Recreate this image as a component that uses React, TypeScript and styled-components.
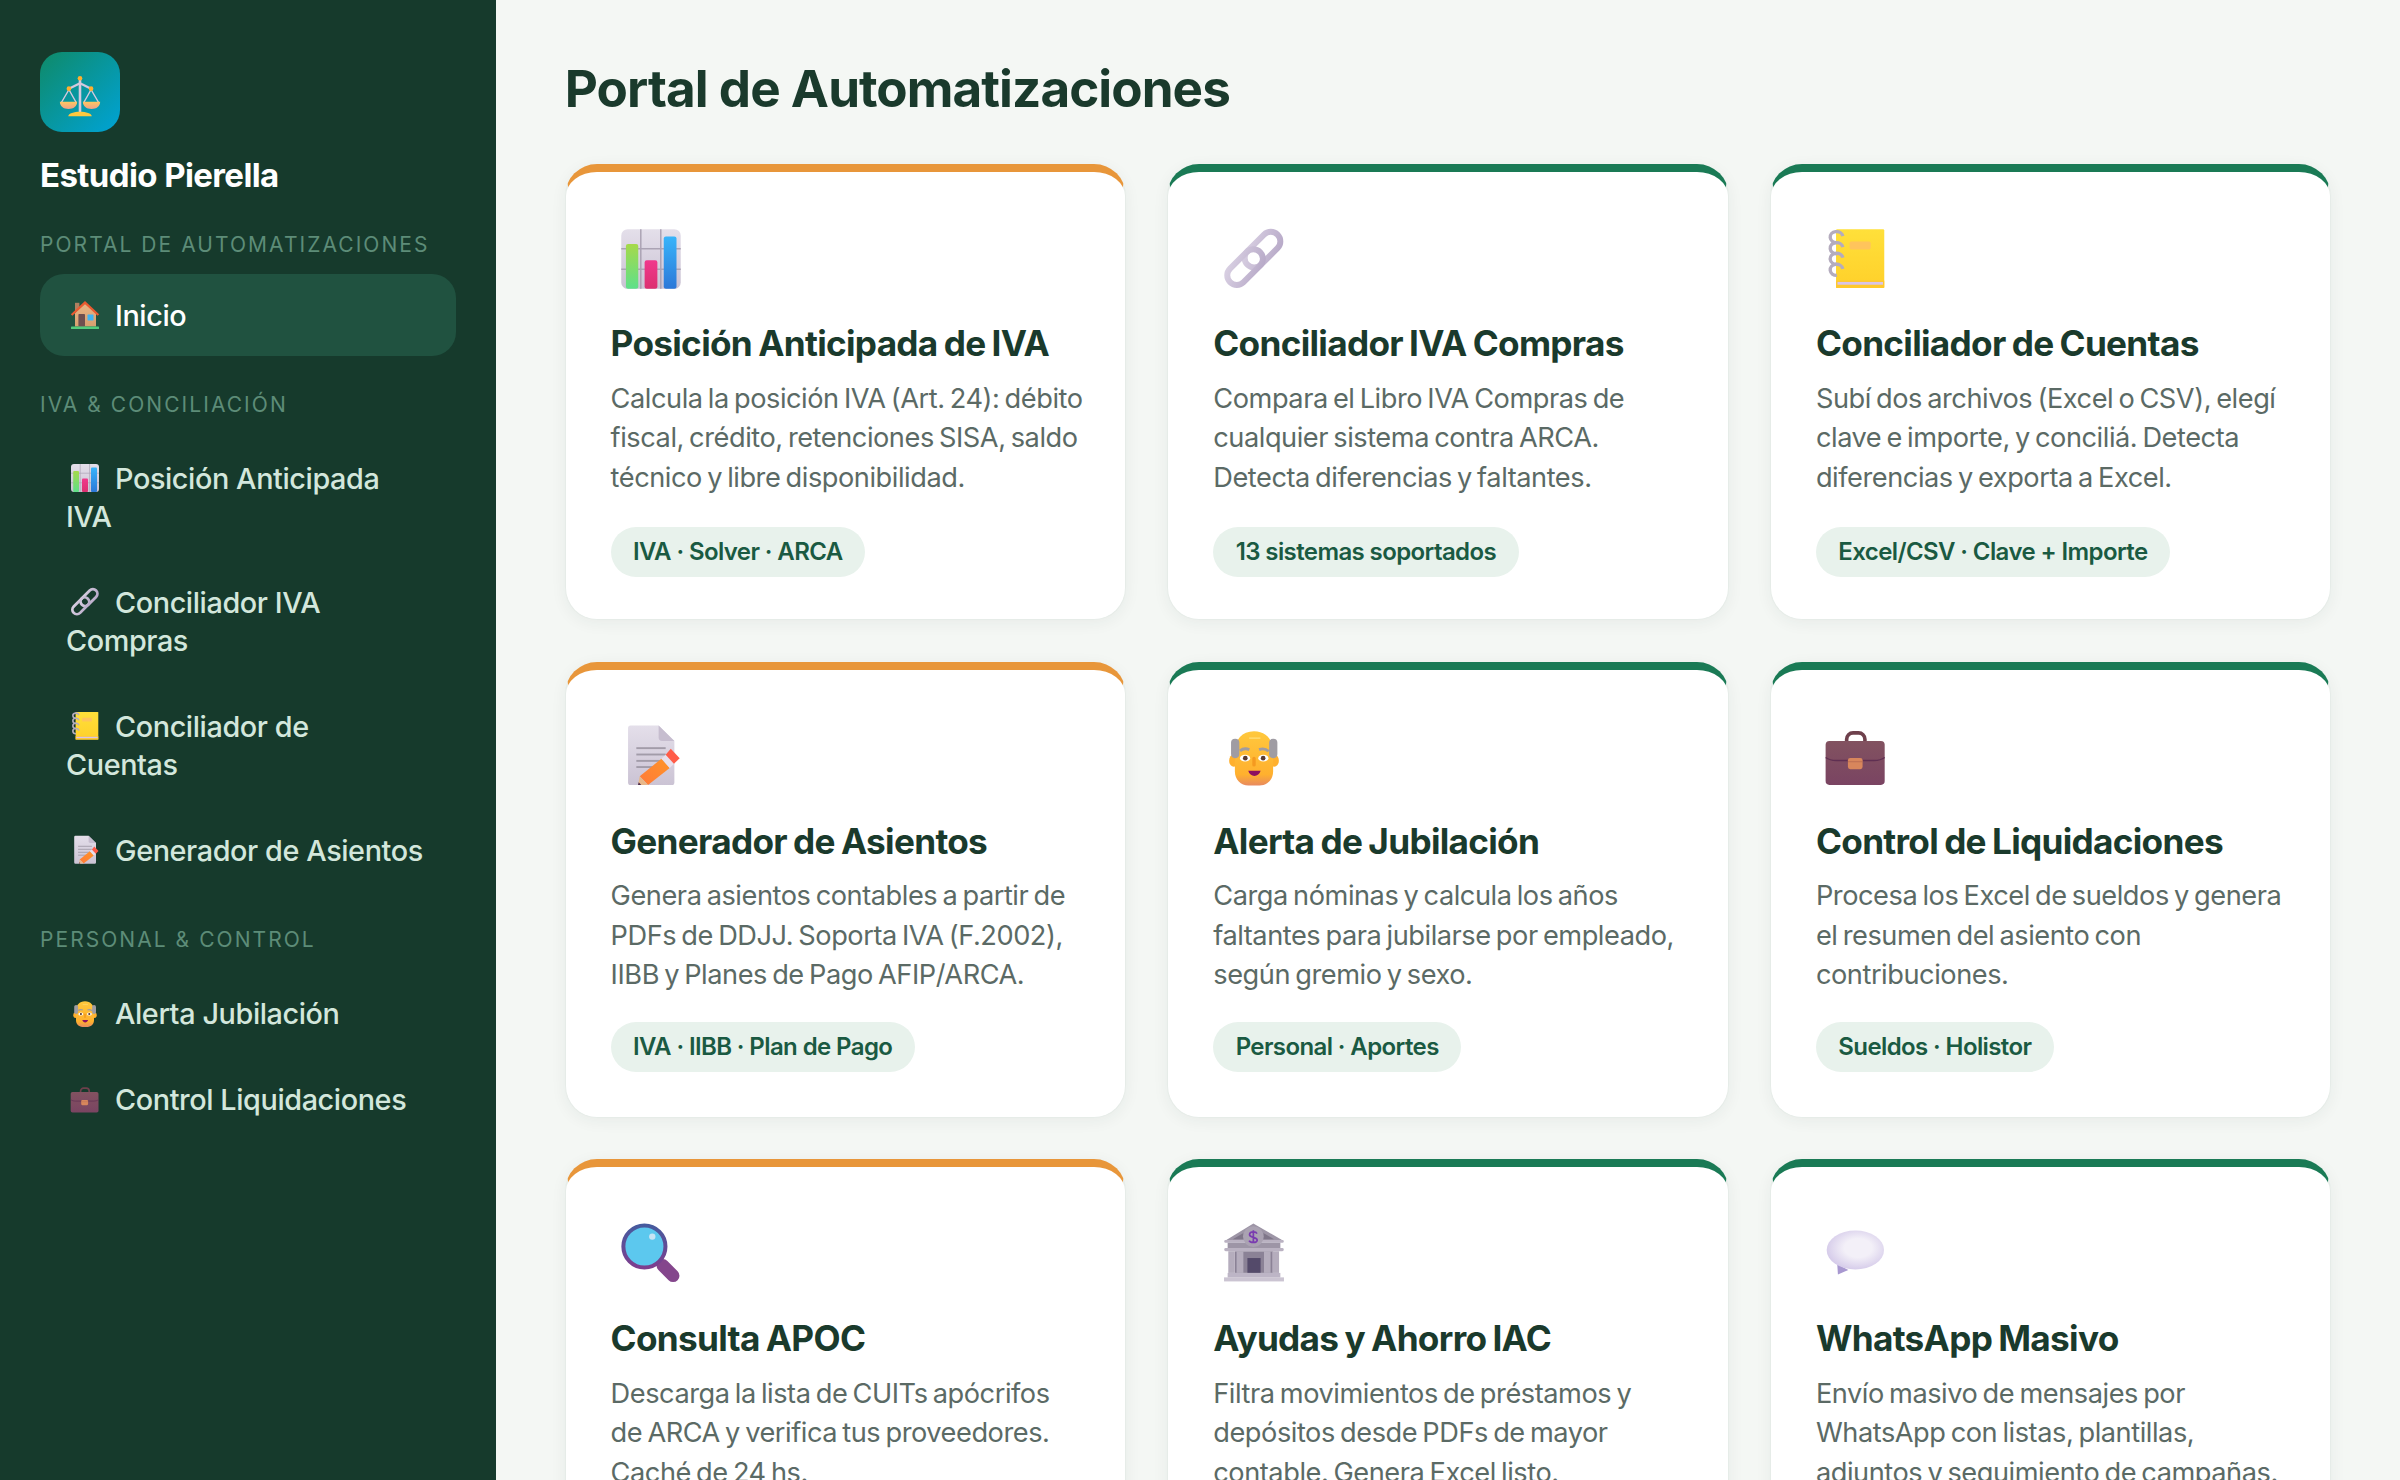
import React from 'react';
import styled, { createGlobalStyle } from 'styled-components';

const FONT = '"Inter", "Liberation Sans", sans-serif';

const GlobalStyle = createGlobalStyle`
  html, body {
    margin: 0;
    padding: 0;
    background: #f4f7f4;
  }
  * {
    box-sizing: border-box;
  }
`;

const Page = styled.div`
  display: flex;
  height: 1480px;
  overflow: hidden;
  font-family: ${FONT};
`;

const Sidebar = styled.aside`
  flex: none;
  width: 496px;
  padding: 52px 40px 0;
  background: #163a2c;
`;

const Logo = styled.div`
  display: flex;
  align-items: center;
  justify-content: center;
  width: 80px;
  height: 80px;
  padding-top: 8px;
  border-radius: 22px;
  background: linear-gradient(135deg, #0f8a68, #00a3d6);
`;

const Brand = styled.div`
  margin-top: 20.5px;
  font-size: 33px;
  line-height: 44px;
  font-weight: 700;
  letter-spacing: -0.6px;
  color: #ffffff;
`;

const SectionLabel = styled.div<{ $first?: boolean }>`
  margin: ${(p) => (p.$first ? '35px' : '36px')} 0 ${(p) => (p.$first ? '16.5px' : '19px')};
  font-size: 21px;
  line-height: 26px;
  font-weight: 400;
  letter-spacing: 2.05px;
  text-transform: uppercase;
  color: #5d8c78;
`;

const NavItem = styled.div<{ $active?: boolean }>`
  margin-bottom: 4px;
  padding: 23px 31px 21px 26px;
  border-radius: 24px;
  font-size: 28.8px;
  line-height: 38px;
  font-weight: 500;
  letter-spacing: -0.4px;
  color: ${(p) => (p.$active ? '#ffffff' : '#d3e7dc')};
  background: ${(p) => (p.$active ? '#205240' : 'transparent')};
`;

const NavGlyph = styled.svg`
  display: inline-block;
  width: 32px;
  height: 32px;
  margin: 0 14px 0 3px;
  vertical-align: -5px;
`;

const LogoGlyph = styled.svg`
  display: block;
  width: 46px;
  height: 46px;
`;

const CardGlyph = styled.svg`
  display: block;
  width: 68px;
  height: 68px;
  margin: 8px 0 0 6.4px;
`;

const Main = styled.main`
  flex: 1;
  min-width: 0;
  padding: 58px 68.8px 0;
`;

const Heading = styled.h1`
  margin: 0 0 45px;
  font-size: 51.2px;
  line-height: 61px;
  font-weight: 700;
  letter-spacing: -0.95px;
  color: #1a3a2c;
`;

const CardGrid = styled.div`
  display: grid;
  grid-template-columns: repeat(3, minmax(0, 1fr));
  gap: 41.6px;
`;

const CardTitle = styled.h2`
  margin: 27.5px 0 12.5px;
  font-size: 35.2px;
  line-height: 46px;
  font-weight: 700;
  letter-spacing: -0.7px;
  word-spacing: -1.5px;
  color: #1a3a2c;
`;

const CardText = styled.p`
  margin: 0;
  font-size: 27.2px;
  line-height: 39.4px;
  font-weight: 400;
  letter-spacing: -0.45px;
  word-spacing: -2px;
  color: #5b6a65;
  white-space: pre;
`;

const Tag = styled.span`
  display: inline-block;
  margin-top: 30px;
  padding: 0 22.4px;
  border-radius: 26px;
  font-size: 24px;
  line-height: 50px;
  font-weight: 600;
  letter-spacing: -0.6px;
  color: #1a5a42;
  background: #e8f2ec;
`;

const Card = styled.article<{ $accent: string }>`
  height: 456px;
  padding: 44.8px 44.8px 0;
  border: 1.6px solid #e6ece8;
  border-top: 8px solid ${(p) => p.$accent};
  border-radius: 32px;
  background: #ffffff;
  box-shadow: 0 3px 16px rgba(26, 58, 44, 0.06);

  &:nth-child(n + 4) ${Tag} {
    margin-top: 27px;
  }
`;

const HiddenDefs = styled.svg`
  position: absolute;
  width: 0;
  height: 0;
`;

const Gradients = () => (
  <HiddenDefs aria-hidden="true">
    <defs>
      <linearGradient id="e-paper" x1="0" y1="0" x2="0" y2="1">
        <stop offset="0" stopColor="#e4dfea" />
        <stop offset="1" stopColor="#cbc3d4" />
      </linearGradient>
      <linearGradient id="e-green" x1="0" y1="0" x2="0" y2="1">
        <stop offset="0" stopColor="#a6d94a" />
        <stop offset="1" stopColor="#5ee08a" />
      </linearGradient>
      <linearGradient id="e-pink" x1="0" y1="0" x2="0" y2="1">
        <stop offset="0" stopColor="#f0388c" />
        <stop offset="1" stopColor="#dc3070" />
      </linearGradient>
      <linearGradient id="e-blue" x1="0" y1="0" x2="0" y2="1">
        <stop offset="0" stopColor="#38b4fa" />
        <stop offset="1" stopColor="#2c78d8" />
      </linearGradient>
      <linearGradient id="e-chain" x1="0" y1="0" x2="1" y2="1">
        <stop offset="0" stopColor="#d8cfe2" />
        <stop offset="1" stopColor="#b8aac8" />
      </linearGradient>
      <linearGradient id="e-book" x1="0" y1="0" x2="0" y2="1">
        <stop offset="0" stopColor="#ffe03a" />
        <stop offset="1" stopColor="#ffd02a" />
      </linearGradient>
      <linearGradient id="e-pencil" x1="1" y1="0" x2="0" y2="1">
        <stop offset="0" stopColor="#ff9428" />
        <stop offset="1" stopColor="#ff7a3a" />
      </linearGradient>
      <linearGradient id="e-face" x1="0" y1="0" x2="0" y2="1">
        <stop offset="0" stopColor="#ffc83d" />
        <stop offset="0.8" stopColor="#ffb02e" />
        <stop offset="1" stopColor="#e88a60" />
      </linearGradient>
      <linearGradient id="e-case" x1="0" y1="0" x2="0" y2="1">
        <stop offset="0" stopColor="#825260" />
        <stop offset="1" stopColor="#7a4462" />
      </linearGradient>
      <linearGradient id="e-ring" x1="0" y1="0" x2="0" y2="1">
        <stop offset="0" stopColor="#465a9e" />
        <stop offset="1" stopColor="#7e3e8e" />
      </linearGradient>
      <radialGradient id="e-bubble" cx="0.55" cy="0.45" r="0.6">
        <stop offset="0.4" stopColor="#f3f0f8" />
        <stop offset="1" stopColor="#d2c7e8" />
      </radialGradient>
      <linearGradient id="e-wall" x1="0" y1="0" x2="0" y2="1">
        <stop offset="0" stopColor="#e8b484" />
        <stop offset="1" stopColor="#d8a070" />
      </linearGradient>
      <linearGradient id="e-pan" x1="0" y1="0" x2="0" y2="1">
        <stop offset="0" stopColor="#ffc860" />
        <stop offset="1" stopColor="#f0a088" />
      </linearGradient>
    </defs>
  </HiddenDefs>
);

const coils = [5.8, 11, 16, 21.2];
const lines = [11.6, 14.6, 17.6, 20.5];

const drawings: Record<string, React.ReactNode> = {
  house: (
    <>
      <rect x="6" y="3.8" width="4.4" height="9" fill="#b08060" />
      <path d="M6 14 16 4.5 27 14v13.5H6z" fill="url(#e-wall)" />
      <path d="M2.6 16 16 3.6 29.4 16" fill="none" stroke="#ea5a30" strokeWidth="2.2" />
      <rect x="9.4" y="15" width="6.6" height="12.5" rx="0.8" fill="#6f5050" />
      <rect x="18.5" y="15.6" width="6" height="5.8" rx="0.6" fill="#40b4f2" />
      <rect x="2" y="27.6" width="28" height="2.4" rx="0.6" fill="#52cc7c" />
    </>
  ),
  chart: (
    <>
      <rect x="2" y="2" width="28" height="28" rx="3" fill="url(#e-paper)" />
      <path d="M11.2 2v28M20.6 2v28M2 11.2h28M2 20.8h28" stroke="#aba3b4" strokeWidth="0.7" />
      <rect x="4.2" y="8.9" width="5.8" height="21.1" rx="1" fill="url(#e-green)" />
      <rect x="13" y="16.6" width="6" height="13.4" rx="1" fill="url(#e-pink)" />
      <rect x="22" y="5.4" width="6" height="24.6" rx="1" fill="url(#e-blue)" />
    </>
  ),
  link: (
    <>
      <rect x="10" y="7.1" width="20" height="9" rx="4.5" transform="rotate(-45 20 11.6)" fill="none" stroke="url(#e-chain)" strokeWidth="2.8" />
      <rect x="1.8" y="15.3" width="20" height="9" rx="4.5" transform="rotate(-45 11.8 19.8)" fill="none" stroke="url(#e-chain)" strokeWidth="2.8" />
    </>
  ),
  book: (
    <g transform="translate(1.1 0)">
      <rect x="5.5" y="2" width="22.7" height="27.6" rx="0.6" fill="url(#e-book)" />
      <rect x="5.5" y="26.2" width="22.7" height="3.4" fill="#ffc82e" />
      <rect x="6.2" y="26.8" width="21.4" height="1.3" fill="#d8c4e8" />
      <rect x="11.9" y="7.8" width="9.9" height="3.7" rx="0.8" fill="#ffc45c" />
      {coils.map((y) => (
        <path key={y} d={`M8.7 ${y - 0.6}A3 2.6 0 1 0 5.9 ${y + 2.5}`} fill="none" stroke="#b4acbe" strokeWidth="1.6" />
      ))}
    </g>
  ),
  memo: (
    <g transform="translate(0 0.7)">
      <path d="M6.4 1h13.2L27 8.2v19.6a1.2 1.2 0 0 1-1.2 1.2H6.4a1.2 1.2 0 0 1-1.2-1.2V2.2A1.2 1.2 0 0 1 6.4 1z" fill="url(#e-paper)" />
      <path d="M19.6 1 27 8.2h-5.8a1.6 1.6 0 0 1-1.6-1.6z" fill="#c6bdcf" />
      {lines.map((y) => (
        <path key={y} d={`M9.1 ${y}H22.9`} stroke="#a29ca9" strokeWidth="0.9" />
      ))}
      <path d="M20.9 16.6 24.8 20.9 14.6 28.9 10.7 24.8z" fill="url(#e-pencil)" />
      <path d="M10.7 24.8 14.6 28.9 9.9 28.9z" fill="#e8b88a" />
      <path d="M10.2 27.6 11.4 28.9H9.9z" fill="#4a2a4a" />
      <path d="M22.9 14.7 26.8 19 24.8 20.9 20.9 16.6z" fill="#e8e0ec" />
      <path d="M25.3 11.9 29.5 16.3 26.8 19 22.9 14.7z" fill="#ff5c48" />
    </g>
  ),
  elder: (
    <g transform="translate(0 0.7)">
      <ellipse cx="6.5" cy="17.5" rx="2.2" ry="2.9" fill="#ffb02e" />
      <ellipse cx="25.5" cy="17.5" rx="2.2" ry="2.9" fill="#ffb02e" />
      <path d="M16 3.6c5.6 0 9 4 9 9.6v9.4c0 3.8-2.8 6.6-6.4 6.6h-5.2C9.8 29.2 7 26.4 7 22.6v-9.4c0-5.6 3.4-9.6 9-9.6z" fill="url(#e-face)" />
      <rect x="5.2" y="7.2" width="3.9" height="9.1" rx="1.9" fill="#9f9ca3" />
      <rect x="23.1" y="7.2" width="3.9" height="9.1" rx="1.9" fill="#9f9ca3" />
      <path d="M13.7 6.9H19" stroke="#ffd86a" strokeWidth="0.8" />
      <path d="M9.4 12.9c1.4-1.2 3-1.2 4.4-.6M18.4 12.3c1.5-.6 3.1-.5 4.5.8" fill="none" stroke="#a19ca0" strokeWidth="1.3" />
      <ellipse cx="11.8" cy="16.3" rx="2.4" ry="1.6" fill="#ffffff" />
      <ellipse cx="20.4" cy="16.3" rx="2.4" ry="1.6" fill="#ffffff" />
      <circle cx="11.9" cy="16.3" r="1.1" fill="#5a3a30" />
      <circle cx="20.3" cy="16.3" r="1.1" fill="#5a3a30" />
      <path d="M16 16.5v3" stroke="#f59a20" strokeWidth="1.6" strokeLinecap="round" />
      <path d="M13.3 22.3h5.8c-.4 1.6-1.6 2.4-2.9 2.4s-2.5-.8-2.9-2.4z" fill="#8c1060" />
    </g>
  ),
  briefcase: (
    <g transform="translate(0 0.7)">
      <path d="M11.6 9V7.4a3 3 0 0 1 3-3h2.6a3 3 0 0 1 3 3V9" fill="none" stroke="#6e404c" strokeWidth="1.7" />
      <rect x="1.7" y="8.2" width="27.8" height="20.7" rx="1.8" fill="url(#e-case)" />
      <path d="M1.7 16c1.4 1 3 1.4 5 1.4h17.8c2 0 3.6-.4 5-1.4" fill="none" stroke="#5f2f52" strokeWidth="0.7" />
      <rect x="12.2" y="16.2" width="6.9" height="5.3" rx="1.1" fill="#d8865c" />
      <path d="M12.2 18h6.9" stroke="#b86a50" strokeWidth="0.4" />
    </g>
  ),
  search: (
    <>
      <path d="M21.6 21.4 26.4 26.2" stroke="#84468c" strokeWidth="6" strokeLinecap="round" />
      <circle cx="12.9" cy="12.5" r="9.9" fill="#5cc8ee" stroke="url(#e-ring)" strokeWidth="1.9" />
      <circle cx="16.6" cy="7.8" r="1.5" fill="#c8e4f4" />
    </>
  ),
  bank: (
    <>
      <rect x="7" y="14.7" width="18" height="10.2" fill="#8b8296" />
      <path d="M15.7 1.6 29.8 9.8H2.4z" fill="#9d95a6" />
      <path d="M15.7 3.4 25.4 9H6z" fill="#7f7689" />
      <rect x="2" y="9.4" width="28" height="1.3" rx="0.6" fill="#bab2c2" />
      <rect x="3.6" y="10.7" width="24.8" height="2.6" fill="#9d95a6" />
      <rect x="2" y="13.2" width="28" height="1.5" rx="0.7" fill="#bab2c2" />
      <circle cx="15.7" cy="7.8" r="4.9" fill="#aaa2b2" />
      <path d="M17.4 6.4c-.4-1-3.4-1.2-3.5.4-.1 1.7 3.7 1 3.6 2.7-.1 1.5-3.3 1.3-3.8.2M15.7 4.8v6" fill="none" stroke="#7a3cb0" strokeWidth="0.8" />
      <rect x="3.9" y="14.7" width="3.1" height="10.2" fill="#b5adbd" />
      <rect x="7.8" y="14.7" width="3.2" height="10.2" fill="#b5adbd" />
      <rect x="20.7" y="14.7" width="3.1" height="10.2" fill="#b5adbd" />
      <rect x="24.6" y="14.7" width="3.2" height="10.2" fill="#b5adbd" />
      <rect x="12.9" y="17.9" width="6.2" height="7" fill="#544a6a" />
      <rect x="3.6" y="24.9" width="24.8" height="2.2" fill="#bdb5c6" />
      <rect x="1.9" y="27" width="28.2" height="1.9" fill="#cbc4d2" />
    </>
  ),
  bubble: (
    <>
      <path d="M7.2 20.8 12.4 23.5 7.5 25.7z" fill="#a898d0" />
      <ellipse cx="15.7" cy="14.1" rx="13.5" ry="9.2" fill="url(#e-bubble)" />
    </>
  ),
  scales: (
    <>
      <path d="M8.3 11.6 2.8 21M8.3 11.6 13.6 21M23.7 11.6 18.4 21M23.7 11.6 29.2 21" fill="none" stroke="#d4c9de" strokeWidth="0.9" />
      <path d="M8.3 10.9 16 7.1 23.7 10.9" fill="none" stroke="#d4c9de" strokeWidth="1.6" />
      <rect x="15.1" y="4" width="1.8" height="24" fill="#d4c9de" />
      <circle cx="16" cy="3.7" r="1.6" fill="#ffb02e" />
      <circle cx="8.3" cy="10.9" r="1.6" fill="#ffb02e" />
      <circle cx="23.7" cy="10.9" r="1.6" fill="#ffb02e" />
      <path d="M2 20h12c0 3.2-2.5 5-6 5s-6-1.8-6-5z" fill="url(#e-pan)" />
      <path d="M18 20h12c0 3.2-2.5 5-6 5s-6-1.8-6-5z" fill="url(#e-pan)" />
      <path d="M7.8 30c.2-1.8 4-3 8.2-3s8 1.2 8.2 3z" fill="#ffc83d" />
    </>
  ),
};

const sections = [
  {
    label: 'Portal de Automatizaciones',
    items: [{ icon: 'house', text: 'Inicio', active: true }],
  },
  {
    label: 'IVA & Conciliación',
    items: [
      { icon: 'chart', text: 'Posición Anticipada IVA' },
      { icon: 'link', text: 'Conciliador IVA Compras' },
      { icon: 'book', text: 'Conciliador de Cuentas' },
      { icon: 'memo', text: 'Generador de Asientos' },
    ],
  },
  {
    label: 'Personal & Control',
    items: [
      { icon: 'elder', text: 'Alerta Jubilación' },
      { icon: 'briefcase', text: 'Control Liquidaciones' },
    ],
  },
];

const ORANGE = '#e8963a';
const GREEN = '#1a7a55';

const cards = [
  {
    icon: 'chart',
    accent: ORANGE,
    title: 'Posición Anticipada de IVA',
    text: 'Calcula la posición IVA (Art. 24): débito\nfiscal, crédito, retenciones SISA, saldo\ntécnico y libre disponibilidad.',
    tag: 'IVA · Solver · ARCA',
  },
  {
    icon: 'link',
    accent: GREEN,
    title: 'Conciliador IVA Compras',
    text: 'Compara el Libro IVA Compras de\ncualquier sistema contra ARCA.\nDetecta diferencias y faltantes.',
    tag: '13 sistemas soportados',
  },
  {
    icon: 'book',
    accent: GREEN,
    title: 'Conciliador de Cuentas',
    text: 'Subí dos archivos (Excel o CSV), elegí\nclave e importe, y conciliá. Detecta\ndiferencias y exporta a Excel.',
    tag: 'Excel/CSV · Clave + Importe',
  },
  {
    icon: 'memo',
    accent: ORANGE,
    title: 'Generador de Asientos',
    text: 'Genera asientos contables a partir de\nPDFs de DDJJ. Soporta IVA (F.2002),\nIIBB y Planes de Pago AFIP/ARCA.',
    tag: 'IVA · IIBB · Plan de Pago',
  },
  {
    icon: 'elder',
    accent: GREEN,
    title: 'Alerta de Jubilación',
    text: 'Carga nóminas y calcula los años\nfaltantes para jubilarse por empleado,\nsegún gremio y sexo.',
    tag: 'Personal · Aportes',
  },
  {
    icon: 'briefcase',
    accent: GREEN,
    title: 'Control de Liquidaciones',
    text: 'Procesa los Excel de sueldos y genera\nel resumen del asiento con\ncontribuciones.',
    tag: 'Sueldos · Holistor',
  },
  {
    icon: 'search',
    accent: ORANGE,
    title: 'Consulta APOC',
    text: 'Descarga la lista de CUITs apócrifos\nde ARCA y verifica tus proveedores.\nCaché de 24 hs.',
  },
  {
    icon: 'bank',
    accent: GREEN,
    title: 'Ayudas y Ahorro IAC',
    text: 'Filtra movimientos de préstamos y\ndepósitos desde PDFs de mayor\ncontable. Genera Excel listo.',
  },
  {
    icon: 'bubble',
    accent: GREEN,
    title: 'WhatsApp Masivo',
    text: 'Envío masivo de mensajes por\nWhatsApp con listas, plantillas,\nadjuntos y seguimiento de campañas.',
  },
];

const App = () => {
  return (
    <Page>
      <GlobalStyle />
      <Gradients />
      <Sidebar>
        <Logo>
          <LogoGlyph viewBox="0 0 32 32">{drawings.scales}</LogoGlyph>
        </Logo>
        <Brand>Estudio Pierella</Brand>
        {sections.map((section, i) => (
          <React.Fragment key={section.label}>
            <SectionLabel $first={i === 0}>{section.label}</SectionLabel>
            {section.items.map((item) => (
              <NavItem key={item.text} $active={'active' in item}>
                <NavGlyph viewBox="0 0 32 32">{drawings[item.icon]}</NavGlyph>
                {item.text}
              </NavItem>
            ))}
          </React.Fragment>
        ))}
      </Sidebar>
      <Main>
        <Heading>Portal de Automatizaciones</Heading>
        <CardGrid>
          {cards.map((card) => (
            <Card key={card.title} $accent={card.accent}>
              <CardGlyph viewBox="0 0 32 32">{drawings[card.icon]}</CardGlyph>
              <CardTitle>{card.title}</CardTitle>
              <CardText>{card.text}</CardText>
              {card.tag && <Tag>{card.tag}</Tag>}
            </Card>
          ))}
        </CardGrid>
      </Main>
    </Page>
  );
};

export default App;
